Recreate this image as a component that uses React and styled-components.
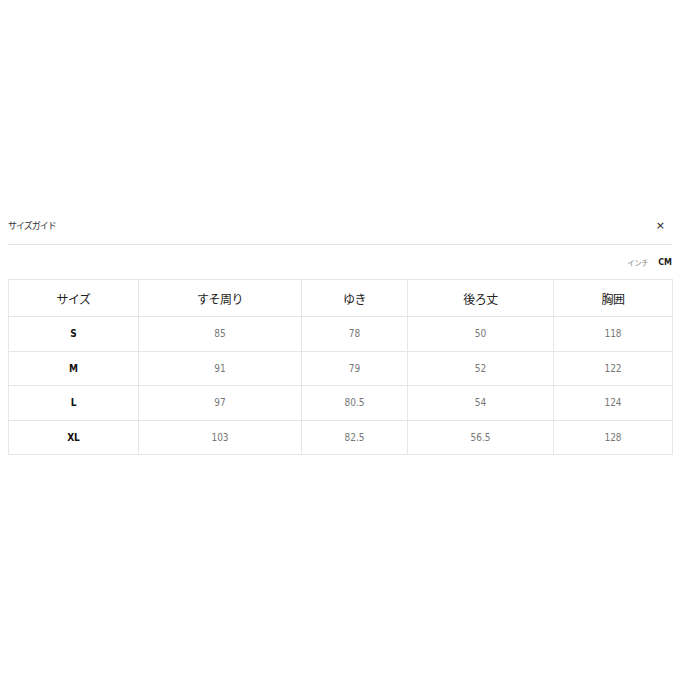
import React from 'react';
import styled, { createGlobalStyle } from 'styled-components';

const GlobalStyle = createGlobalStyle`
  body {
    margin: 0;
    background: #fff;
    font-family: 'Noto Sans CJK JP', 'Noto Sans', sans-serif;
    color: #1b1b1b;
  }
`;

const Page = styled.div`
  width: 680px;
  height: 680px;
  box-sizing: border-box;
  padding: 216px 8px 0;
`;

const Header = styled.div`
  display: flex;
  justify-content: space-between;
  align-items: center;
  height: 18px;
  padding-bottom: 10px;
  border-bottom: 1px solid #e3e3e3;
`;

const Title = styled.h2`
  margin: 0;
  font-size: 9px;
  font-weight: 400;
  letter-spacing: -1px;
  color: #333;
`;

const Close = styled.button`
  border: none;
  background: none;
  padding: 0 7px 0 0;
  font-family: 'DejaVu Sans', sans-serif;
  font-size: 11px;
  color: #222;
  line-height: 1;
`;

const Units = styled.div`
  display: flex;
  justify-content: flex-end;
  align-items: center;
  gap: 10px;
  height: 14px;
  margin: 10px 0 10px;
`;

const Unit = styled.span`
  font-size: ${(p) => (p.active ? '8px' : '7.5px')};
  font-weight: ${(p) => (p.active ? 700 : 400)};
  letter-spacing: ${(p) => (p.active ? '0' : '-0.5px')};
  color: ${(p) => (p.active ? '#222' : '#888')};
  font-family: ${(p) =>
    p.active ? "'DejaVu Sans', sans-serif" : "'Noto Sans CJK JP', sans-serif"};
`;

const Table = styled.table`
  width: 664px;
  border-collapse: collapse;
  table-layout: fixed;
`;

const Th = styled.th`
  height: 36px;
  border: 1px solid #e6e6e6;
  font-size: 12px;
  font-weight: 400;
  letter-spacing: -0.5px;
  color: #222;
  text-align: center;
  padding: 0;
`;

const Td = styled.td`
  height: 33.5px;
  border: 1px solid #e6e6e6;
  text-align: center;
  padding: 0;
  font-family: 'DejaVu Sans Condensed', 'DejaVu Sans', sans-serif;
  font-size: 10px;
  font-weight: ${(p) => (p.label ? 700 : 400)};
  color: ${(p) => (p.label ? '#111' : '#777')};
`;

const columns = [
  { label: 'サイズ', width: 130 },
  { label: 'すそ周り', width: 163 },
  { label: 'ゆき', width: 106 },
  { label: '後ろ丈', width: 146 },
  { label: '胸囲', width: 119 },
];

const rows = [
  ['S', '85', '78', '50', '118'],
  ['M', '91', '79', '52', '122'],
  ['L', '97', '80.5', '54', '124'],
  ['XL', '103', '82.5', '56.5', '128'],
];

export default function App() {
  return (
    <>
      <GlobalStyle />
      <Page>
        <Header>
          <Title>サイズガイド</Title>
          <Close aria-label="close">×</Close>
        </Header>
        <Units>
          <Unit>インチ</Unit>
          <Unit active>CM</Unit>
        </Units>
        <Table>
          <colgroup>
            {columns.map((c) => (
              <col key={c.label} style={{ width: c.width }} />
            ))}
          </colgroup>
          <thead>
            <tr>
              {columns.map((c) => (
                <Th key={c.label}>{c.label}</Th>
              ))}
            </tr>
          </thead>
          <tbody>
            {rows.map((r) => (
              <tr key={r[0]}>
                {r.map((v, i) => (
                  <Td key={i} label={i === 0}>
                    {v}
                  </Td>
                ))}
              </tr>
            ))}
          </tbody>
        </Table>
      </Page>
    </>
  );
}
